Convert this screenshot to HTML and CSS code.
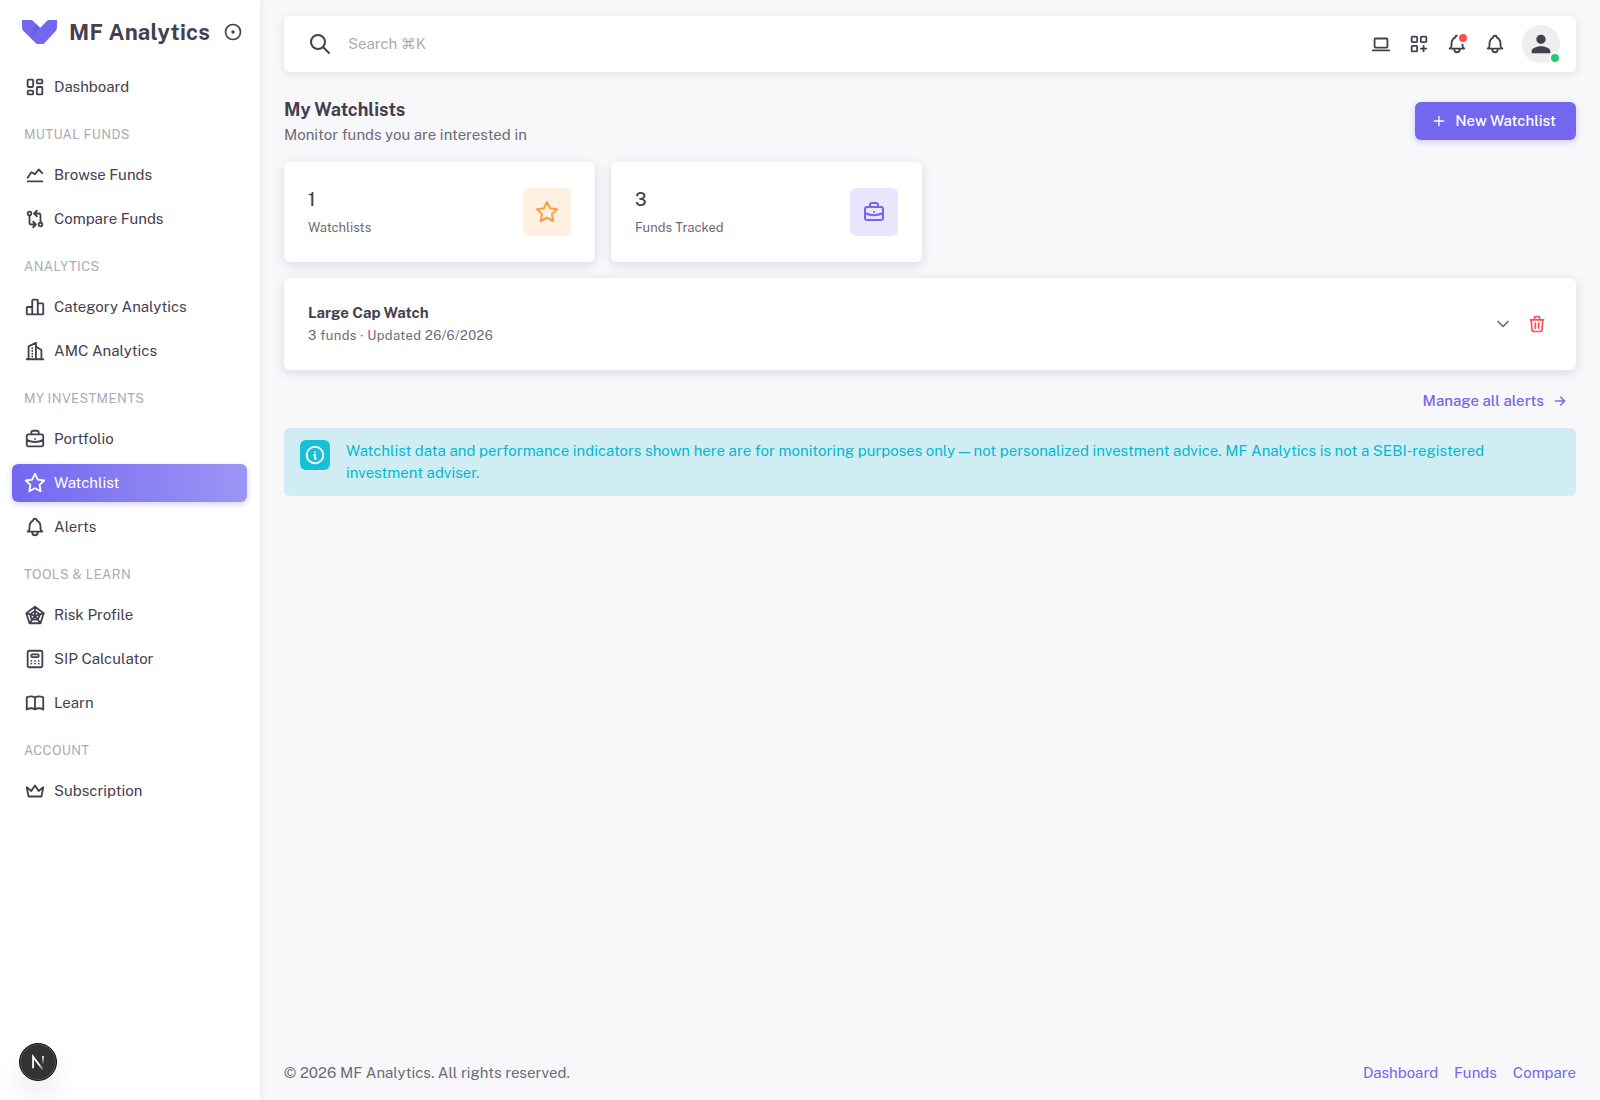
FILE: index.html
```html
<!DOCTYPE html>
<html lang="en">
<head>
	<meta charset="UTF-8">
	<meta name="viewport" content="width=device-width, initial-scale=1.0">
	<title>My Watchlists - MF Analytics</title>
	<link rel="stylesheet" href="styles.css">
</head>
<body>
	<!-- shared icons -->
	<svg class="sprite">
		<symbol id="bell" viewBox="0 0 24 24"><path d="M10 5a2 2 0 1 1 4 0a7 7 0 0 1 4 6v3a4 4 0 0 0 2 3h-16a4 4 0 0 0 2 -3v-3a7 7 0 0 1 4 -6M9 17v1a3 3 0 0 0 6 0v-1"/></symbol>
		<symbol id="star" viewBox="0 0 24 24"><path d="M12 17.75l-6.172 3.245l1.179 -6.873l-5 -4.867l6.9 -1l3.086 -6.253l3.086 6.253l6.9 1l-5 4.867l1.179 6.873z"/></symbol>
		<symbol id="briefcase" viewBox="0 0 24 24"><path d="M3 9a2 2 0 0 1 2 -2h14a2 2 0 0 1 2 2v9a2 2 0 0 1 -2 2h-14a2 2 0 0 1 -2 -2zM8 7v-2a2 2 0 0 1 2 -2h4a2 2 0 0 1 2 2v2M12 12v.01M3 13a20 20 0 0 0 18 0"/></symbol>
	</svg>

	<div class="layout">
		<!-- sidebar -->
		<aside class="sidebar">
			<div class="brand">
				<svg class="logo" viewBox="0 0 32 22">
					<path fill="#7367f0" d="M0 0V6.854C0 6.854 -.133 9.012 1.981 10.839L13.691 21.996L19.781 21.918L18.804 9.882L16.495 7.173L9.238 0H0Z"/>
					<path fill="#161616" opacity=".06" d="M7.698 16.436L12.52 3.237L16.554 7.256L7.698 16.436Z"/>
					<path fill="#161616" opacity=".06" d="M8.078 15.918L13.942 4.64L16.585 7.285L8.078 15.918Z"/>
					<path fill="#7367f0" d="M7.773 16.357L23.656 0H32V6.884C32 6.884 31.826 9.178 30.659 10.406L19.782 22H13.694L7.773 16.357Z"/>
				</svg>
				<span class="brand-name">MF Analytics</span>
				<svg class="icon pin" viewBox="0 0 24 24"><circle cx="12" cy="12" r="9"/><circle cx="12" cy="12" r="1"/></svg>
			</div>
			<nav class="menu">
				<a class="item"><svg class="icon" viewBox="0 0 24 24"><path d="M5 4h4a1 1 0 0 1 1 1v6a1 1 0 0 1 -1 1h-4a1 1 0 0 1 -1 -1v-6a1 1 0 0 1 1 -1M5 16h4a1 1 0 0 1 1 1v2a1 1 0 0 1 -1 1h-4a1 1 0 0 1 -1 -1v-2a1 1 0 0 1 1 -1M15 12h4a1 1 0 0 1 1 1v6a1 1 0 0 1 -1 1h-4a1 1 0 0 1 -1 -1v-6a1 1 0 0 1 1 -1M15 4h4a1 1 0 0 1 1 1v2a1 1 0 0 1 -1 1h-4a1 1 0 0 1 -1 -1v-2a1 1 0 0 1 1 -1"/></svg><span>Dashboard</span></a>
				<p class="section">MUTUAL FUNDS</p>
				<a class="item"><svg class="icon" viewBox="0 0 24 24"><path d="M4 19h16M4 15l4 -6l4 2l4 -5l4 4"/></svg><span>Browse Funds</span></a>
				<a class="item"><svg class="icon" viewBox="0 0 24 24"><circle cx="6" cy="6" r="2"/><circle cx="18" cy="18" r="2"/><path d="M11 6h5a2 2 0 0 1 2 2v8M14 9l-3 -3l3 -3M13 18h-5a2 2 0 0 1 -2 -2v-8M10 15l3 3l-3 3"/></svg><span>Compare Funds</span></a>
				<p class="section">ANALYTICS</p>
				<a class="item"><svg class="icon" viewBox="0 0 24 24"><path d="M9 20h-5a1 1 0 0 1 -1 -1v-6a1 1 0 0 1 1 -1h5M9 20v-15a1 1 0 0 1 1 -1h4a1 1 0 0 1 1 1v15zM15 8h5a1 1 0 0 1 1 1v10a1 1 0 0 1 -1 1h-5"/></svg><span>Category Analytics</span></a>
				<a class="item"><svg class="icon" viewBox="0 0 24 24"><path d="M3 21h18M5 21v-14l8 -4v18M19 21v-10l-6 -4M9 9v.01M9 12v.01M9 15v.01M9 18v.01"/></svg><span>AMC Analytics</span></a>
				<p class="section">MY INVESTMENTS</p>
				<a class="item"><svg class="icon"><use href="#briefcase"/></svg><span>Portfolio</span></a>
				<a class="item active"><svg class="icon"><use href="#star"/></svg><span>Watchlist</span></a>
				<a class="item"><svg class="icon"><use href="#bell"/></svg><span>Alerts</span></a>
				<p class="section">TOOLS &amp; LEARN</p>
				<a class="item"><svg class="icon" viewBox="0 0 24 24"><path d="M12 3l9.5 7l-3.5 11h-12l-3.5 -11zM12 7.5l5.5 4l-2.5 5.5h-6.5l-2 -5.5zM2.5 10l9.5 3l9.5 -3M12 3v10l6 8M6 21l6 -8"/></svg><span>Risk Profile</span></a>
				<a class="item"><svg class="icon" viewBox="0 0 24 24"><rect x="4" y="3" width="16" height="18" rx="2"/><rect x="8" y="7" width="8" height="3" rx="1"/><path d="M8 14v.01M12 14v.01M16 14v.01M8 17v.01M12 17v.01M16 17v.01"/></svg><span>SIP Calculator</span></a>
				<a class="item"><svg class="icon" viewBox="0 0 24 24"><path d="M3 19a9 9 0 0 1 9 0a9 9 0 0 1 9 0M3 6a9 9 0 0 1 9 0a9 9 0 0 1 9 0M3 6v13M12 6v13M21 6v13"/></svg><span>Learn</span></a>
				<p class="section">ACCOUNT</p>
				<a class="item"><svg class="icon" viewBox="0 0 24 24"><path d="M12 6l4 6l5 -4l-2 10h-14l-2 -10l5 4z"/></svg><span>Subscription</span></a>
			</nav>
		</aside>

		<div class="page">
			<!-- top bar -->
			<header class="navbar">
				<svg class="icon search-icon" viewBox="0 0 24 24"><circle cx="10" cy="10" r="7"/><path d="M21 21l-6 -6"/></svg>
				<span class="search-text">Search ⌘K</span>
				<div class="tools">
					<svg class="icon" viewBox="0 0 24 24"><path d="M3 19h18"/><rect x="5" y="6" width="14" height="10" rx="1"/></svg>
					<svg class="icon" viewBox="0 0 24 24"><rect x="4" y="4" width="6" height="6" rx="1"/><rect x="14" y="4" width="6" height="6" rx="1"/><rect x="4" y="14" width="6" height="6" rx="1"/><path d="M14 17h6m-3 -3v6"/></svg>
					<span class="notify"><svg class="icon"><use href="#bell"/></svg><i class="dot"></i></span>
					<svg class="icon"><use href="#bell"/></svg>
					<span class="avatar">
						<svg class="person" viewBox="0 0 24 24"><path d="M12 12c2.21 0 4-1.79 4-4s-1.79-4-4-4-4 1.79-4 4 1.79 4 4 4zm0 2c-2.67 0-8 1.34-8 4v2h16v-2c0-2.66-5.33-4-8-4z"/></svg>
						<i class="online"></i>
					</span>
				</div>
			</header>

			<main class="content">
				<div class="heading">
					<div>
						<h1>My Watchlists</h1>
						<p class="subtitle">Monitor funds you are interested in</p>
					</div>
					<button class="btn"><svg class="icon" viewBox="0 0 24 24"><path d="M12 5v14M5 12h14"/></svg><span>New Watchlist</span></button>
				</div>

				<div class="stats">
					<div class="card stat">
						<div>
							<p class="num">1</p>
							<p class="label">Watchlists</p>
						</div>
						<span class="badge warning"><svg class="icon"><use href="#star"/></svg></span>
					</div>
					<div class="card stat">
						<div>
							<p class="num">3</p>
							<p class="label">Funds Tracked</p>
						</div>
						<span class="badge primary"><svg class="icon"><use href="#briefcase"/></svg></span>
					</div>
				</div>

				<div class="card watchlist">
					<div>
						<h2>Large Cap Watch</h2>
						<p class="meta">3 funds · Updated 26/6/2026</p>
					</div>
					<div class="actions">
						<svg class="icon expand" viewBox="0 0 24 24"><path d="M6 9l6 6l6 -6"/></svg>
						<svg class="icon trash" viewBox="0 0 24 24"><path d="M4 7h16M10 11v6M14 11v6M5 7l1 12a2 2 0 0 0 2 2h8a2 2 0 0 0 2 -2l1 -12M9 7v-3a1 1 0 0 1 1 -1h4a1 1 0 0 1 1 1v3"/></svg>
					</div>
				</div>

				<a class="manage"><span>Manage all alerts</span><svg class="icon" viewBox="0 0 24 24"><path d="M5 12h14M13 18l6 -6M13 6l6 6"/></svg></a>

				<div class="alert">
					<span class="alert-icon"><svg class="icon" viewBox="0 0 24 24"><circle cx="12" cy="12" r="9"/><path d="M12 9h.01M11 12h1v4h1"/></svg></span>
					<p>Watchlist data and performance indicators shown here are for monitoring purposes only — not personalized investment advice. MF Analytics is not a SEBI-registered<br>investment adviser.</p>
				</div>
			</main>

			<footer class="footer">
				<p>© 2026 MF Analytics. All rights reserved.</p>
				<div class="links"><a>Dashboard</a><a>Funds</a><a>Compare</a></div>
			</footer>
		</div>
	</div>

	<!-- dev tools button -->
	<div class="dev">
		<svg viewBox="0 0 40 40">
			<defs>
				<linearGradient id="fade1" x1="22" y1="22" x2="27" y2="29" gradientUnits="userSpaceOnUse"><stop stop-color="#fff"/><stop offset="1" stop-color="#fff" stop-opacity="0"/></linearGradient>
				<linearGradient id="fade2" x1="25" y1="13" x2="25" y2="23" gradientUnits="userSpaceOnUse"><stop stop-color="#fff"/><stop offset="1" stop-color="#fff" stop-opacity="0"/></linearGradient>
			</defs>
			<path d="M14.5 27V14.2L25.8 29" stroke="url(#fade1)"/>
			<path d="M25.5 13.2V23" stroke="url(#fade2)"/>
		</svg>
	</div>
</body>
</html>
```
FILE: styles.css
```css
* {
	margin: 0;
	padding: 0;
	box-sizing: border-box;
}
body {
	font-family: "Public Sans", Inter, "Liberation Sans", sans-serif;
	font-size: 15px;
	line-height: 22px;
	color: #6d6b77;
	background-color: #f8f7fa;
}
.sprite {
	display: none;
}
.icon {
	width: 22px;
	height: 22px;
	flex-shrink: 0;
	fill: none;
	stroke: currentColor;
	stroke-width: 2;
	stroke-linecap: round;
	stroke-linejoin: round;
}
.layout {
	display: flex;
	height: 100vh;
}

/* sidebar */
.sidebar {
	width: 260px;
	flex-shrink: 0;
	background-color: #fff;
	color: #444050;
	box-shadow: 0 2px 8px rgba(47, 43, 61, 0.1);
}
.brand {
	display: flex;
	align-items: center;
	height: 64px;
	padding: 0 17px 0 22px;
}
.logo {
	width: 35px;
	height: 24px;
}
.brand-name {
	margin-left: 12px;
	font-size: 22px;
	font-weight: 700;
	letter-spacing: 0.25px;
}
.pin {
	width: 20px;
	height: 20px;
	margin-left: auto;
}
.menu {
	display: flex;
	flex-direction: column;
	padding: 4px 13px 0 12px;
}
.item {
	display: flex;
	align-items: center;
	gap: 8px;
	height: 38px;
	padding: 0 12px;
	border-radius: 6px;
}
.item + .item {
	margin-top: 6px;
}
.item.active {
	color: #fff;
	background: linear-gradient(90deg, #7367f0, #9d95f5);
	box-shadow: 0 2px 6px rgba(115, 103, 240, 0.3);
}
.section {
	height: 50px;
	padding: 18px 12px 0;
	font-size: 13px;
	letter-spacing: 0.4px;
	color: #acaab1;
}

/* page */
.page {
	flex: 1;
	display: flex;
	flex-direction: column;
	padding: 16px 24px;
}
.navbar {
	display: flex;
	align-items: center;
	height: 56px;
	padding: 0 16px 0 24px;
	border-radius: 6px;
	background-color: #fff;
	color: #444050;
	box-shadow: 0 2px 8px rgba(47, 43, 61, 0.12);
}
.search-icon {
	width: 24px;
	height: 24px;
}
.search-text {
	margin-left: 16px;
	color: #acaab1;
}
.tools {
	display: flex;
	align-items: center;
	gap: 16px;
	margin-left: auto;
}
.notify {
	position: relative;
	height: 22px;
}
.dot {
	position: absolute;
	top: -1px;
	right: -1px;
	width: 12px;
	height: 12px;
	border: 2px solid #fff;
	border-radius: 50%;
	background-color: #ff4c51;
}
.avatar {
	position: relative;
	display: flex;
	align-items: center;
	justify-content: center;
	width: 38px;
	height: 38px;
	border-radius: 50%;
	background-color: #eeedf0;
}
.person {
	width: 28px;
	height: 28px;
	fill: #444050;
}
.online {
	position: absolute;
	right: 1px;
	bottom: 1px;
	width: 8px;
	height: 8px;
	border-radius: 50%;
	background-color: #28c76f;
	box-shadow: 0 0 0 2px #fff;
}
.content {
	flex: 1;
	padding-top: 24px;
}
.heading {
	display: flex;
	align-items: center;
	justify-content: space-between;
	height: 50px;
	margin-bottom: 16px;
}
h1 {
	font-size: 18px;
	line-height: 28px;
	font-weight: 700;
	color: #444050;
}
.btn {
	display: flex;
	align-items: center;
	gap: 8px;
	height: 38px;
	padding: 0 20px 0 16px;
	border: none;
	border-radius: 6px;
	font: inherit;
	font-weight: 500;
	color: #fff;
	background-color: #7367f0;
	box-shadow: 0 2px 6px rgba(115, 103, 240, 0.3);
}
.btn .icon {
	width: 16px;
	height: 16px;
}
.card {
	border-radius: 6px;
	background-color: #fff;
	box-shadow: 0 3px 12px rgba(47, 43, 61, 0.14);
}
.stats {
	display: grid;
	grid-template-columns: repeat(4, 1fr);
	gap: 16px;
	margin-bottom: 16px;
}
.stat {
	display: flex;
	align-items: center;
	justify-content: space-between;
	height: 100px;
	padding: 0 24px;
}
.num {
	font-size: 18px;
	line-height: 28px;
	font-weight: 500;
	color: #444050;
}
.label {
	margin-top: 4px;
	font-size: 13px;
	line-height: 20px;
}
.badge {
	display: flex;
	align-items: center;
	justify-content: center;
	width: 48px;
	height: 48px;
	border-radius: 6px;
}
.badge .icon {
	width: 24px;
	height: 24px;
}
.warning {
	color: #ff9f43;
	background-color: #fff0e1;
}
.primary {
	color: #7367f0;
	background-color: #e9e7fd;
}
.watchlist {
	display: flex;
	align-items: center;
	justify-content: space-between;
	height: 92px;
	padding: 0 29px 0 24px;
}
h2 {
	font-size: 15px;
	line-height: 22px;
	font-weight: 700;
	color: #444050;
}
.meta {
	margin: 1px 0 -1px;
	font-size: 13px;
	letter-spacing: 0.4px;
}
.actions {
	display: flex;
	gap: 14px;
}
.actions .icon {
	width: 20px;
	height: 20px;
}
.trash {
	color: #ff4c51;
}
.manage {
	display: flex;
	align-items: center;
	justify-content: flex-end;
	gap: 8px;
	height: 38px;
	margin: 12px 0 8px;
	padding-right: 8px;
	font-weight: 500;
	color: #7367f0;
}
.manage .icon {
	width: 16px;
	height: 16px;
}
.alert {
	display: flex;
	gap: 16px;
	height: 68px;
	padding: 12px 16px;
	border-radius: 6px;
	color: #00bad1;
	background-color: #d0edf3;
}
.alert-icon {
	display: flex;
	align-items: center;
	justify-content: center;
	width: 30px;
	height: 30px;
	border-radius: 6px;
	color: #fff;
	background-color: #16c0d6;
}
.footer {
	display: flex;
	justify-content: space-between;
}
.links {
	display: flex;
	gap: 16px;
	color: #7367f0;
}

/* dev tools button */
.dev {
	position: absolute;
	left: 19px;
	top: 1043px;
	width: 38px;
	height: 38px;
	border: 1px solid #111;
	border-radius: 50%;
	background-color: #333;
	box-shadow: inset 0 0 0 1px #555, 0 16px 32px -8px rgba(0, 0, 0, 0.24);
}
.dev svg {
	display: block;
	fill: none;
	stroke-width: 2;
}
```
